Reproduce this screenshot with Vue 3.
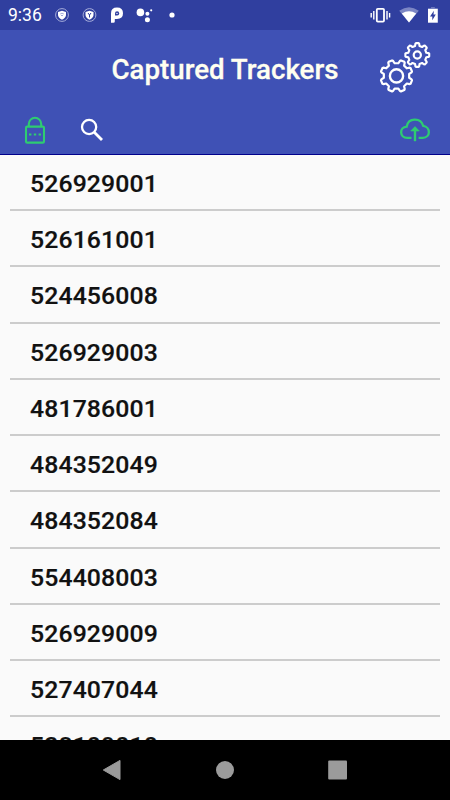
<template>
  <div class="screen">
    <!-- Status bar -->
    <div class="status">
      <span class="time">9:36</span>
      <svg class="status-left" width="136" height="30" viewBox="50 0 136 30">
        <g v-for="x in [62, 89.5]" :key="x">
          <circle :cx="x" cy="15" r="6.4" fill="none" stroke="#a4abd9" stroke-width="1" />
          <path :d="`M${x} 10.7l4 1.4v3q0 2.8-4 4.6q-4-1.8-4-4.6v-3z`" fill="#fff" />
        </g>
        <path d="M60.2 14q1.8-1.6 3.6 0M61 15.5h2" fill="none" stroke="#8c95cf" stroke-width=".8" />
        <path d="M88 13l1.5 2 1.5-2M89.5 15v2.5" fill="none" stroke="#303f9f" stroke-width="1" />
        <path d="M111 22.8V13.4q0-5.8 6-5.8t6 5.7t-6 5.7h-2.2v2.4q0 1.4-1.4 1.4z" fill="#fff" />
        <path d="M115 15.6v-2.2q0-2.1 2.1-2.1t2.1 2.1t-2.1 2.2z" fill="#303f9f" />
        <circle cx="117" cy="13.4" r=".7" fill="#fff" />
        <g fill="#fff">
          <circle cx="140.4" cy="12.4" r="3.8" />
          <circle cx="147.4" cy="13.7" r="2" />
          <circle cx="151.2" cy="10.3" r="1.1" />
          <circle cx="147.4" cy="19.7" r="2.5" />
          <circle cx="172" cy="15" r="2.6" />
        </g>
      </svg>
      <svg class="status-right" width="80" height="30" viewBox="370 0 80 30">
        <rect x="376.8" y="8.8" width="7.2" height="12.8" rx="1" fill="none" stroke="#fff" stroke-width="1.8" />
        <path d="M373.8 11v8.4M371.2 13v4.4M387 11v8.4M389.6 13v4.4" stroke="#fff" stroke-width="1.4" />
        <path d="M399.2 10.8Q409 3.6 418.8 10.8L409 22.5z" fill="#7c86c4" />
        <path d="M401.8 13.6Q409 8.8 416.2 13.6L409 22.5z" fill="#fff" />
        <path d="M428 8.7h9.8v14H428z" fill="#fff" />
        <path d="M431 7.2h3.8v1.5H431z" fill="#7c86c4" />
        <path d="M433.9 10.8l-3.9 5.7h2.3v3.7l3.5-5.7h-2.3z" fill="#303f9f" />
      </svg>
    </div>

    <header class="header">
      <h1>Captured Trackers</h1>
      <svg class="gears" width="60" height="60" viewBox="375 38 60 60">
        <g fill="none" stroke="#fff" stroke-linejoin="round">
          <path :d="gear(396.5, 75.9, 12.8, 16.1, 22.5)" stroke-width="2.2" />
          <circle cx="396.5" cy="75.9" r="6.6" stroke-width="2.4" />
          <path :d="gear(417.3, 55, 9.3, 12, 0)" stroke-width="2.1" />
          <circle cx="417.3" cy="55" r="3.6" stroke-width="2.2" />
        </g>
      </svg>
    </header>

    <div class="toolbar">
      <svg width="22" height="28" viewBox="24 115 22 28">
        <g fill="none" stroke="#2ecc71" stroke-width="2.1">
          <rect x="26" y="125.6" width="18" height="16" rx="1.2" />
          <path d="M28.8 125v-2a6.2 6.2 0 0 1 12.4 0v2" />
        </g>
        <path d="M29 132.5h2.4v2H29zM33.8 132.5h2.4v2h-2.4zM38.6 132.5H41v2h-2.4z" fill="#2ecc71" />
      </svg>
      <svg class="search" width="24" height="24" viewBox="80 117 24 24">
        <circle cx="89.1" cy="126" r="7.1" fill="none" stroke="#fff" stroke-width="2.3" />
        <path d="M94 131l8 8" stroke="#fff" stroke-width="2.9" />
      </svg>
      <svg class="upload" width="32" height="26" viewBox="399 117 32 26">
        <path d="M411.5 137.8h-4.2c-8 0-8.2-10.6-.6-11.2c1.5-9 14-9.2 16.5-.8c7.6 1 7.6 12-.4 12h-4.2" fill="none" stroke="#2ecc71" stroke-width="2.3" />
        <path d="M415 141.2v-12" stroke="#2ecc71" stroke-width="2.4" />
        <path d="M415 126.6l4.3 4.4h-8.6z" fill="#2ecc71" stroke="#2ecc71" stroke-width=".6" />
      </svg>
    </div>

    <ul class="list">
      <li v-for="(t, i) in trackers" :key="i">{{ t }}</li>
    </ul>

    <nav class="nav">
      <svg width="20" height="22" viewBox="0 0 20 22"><path d="M1.3 11L18 1.4v19.2z" fill="#9b9b9b" stroke="#9b9b9b" stroke-linejoin="round" /></svg>
      <svg width="20" height="20" viewBox="0 0 20 20"><circle cx="10" cy="10" r="9" fill="#9b9b9b" /></svg>
      <svg width="20" height="20" viewBox="0 0 20 20"><rect x=".2" y=".4" width="18.8" height="19.2" rx="1" fill="#9b9b9b" /></svg>
    </nav>
  </div>
</template>

<script setup>
const trackers = [
  '526929001',
  '526161001',
  '524456008',
  '526929003',
  '481786001',
  '484352049',
  '484352084',
  '554408003',
  '526929009',
  '527407044',
  '528109010'
]

// outline of an 8-tooth gear, offset in degrees
function gear(cx, cy, inner, outer, offset) {
  const pts = []
  for (let i = 0; i < 8; i++) {
    const mid = offset + i * 45
    for (const [d, r] of [[-14, inner], [-9.5, outer - 0.6], [-6.5, outer], [6.5, outer], [9.5, outer - 0.6], [14, inner]]) {
      const a = ((mid + d - 90) * Math.PI) / 180
      pts.push(`${(cx + r * Math.cos(a)).toFixed(2)} ${(cy + r * Math.sin(a)).toFixed(2)}`)
    }
  }
  return `M${pts.join('L')}z`
}
</script>

<style>
body {
  margin: 0;
}
</style>

<style scoped>
.screen {
  width: 450px;
  height: 800px;
  display: flex;
  flex-direction: column;
  overflow: hidden;
  background: #fafafa;
  font-family: Roboto, "Liberation Sans", sans-serif;
}

svg {
  display: block;
  flex: none;
}

.status {
  height: 30px;
  flex: none;
  display: flex;
  align-items: center;
  background: #303f9f;
  color: #fff;
}

.time {
  width: 42px;
  padding-left: 8px;
  font-size: 17.5px;
  line-height: 32px;
}

.status-right {
  margin-left: auto;
}

.header {
  height: 75px;
  flex: none;
  display: grid;
  grid-template-columns: 75px 1fr 75px;
  background: #3f51b5;
}

h1 {
  grid-column: 2;
  margin: 0;
  text-align: center;
  white-space: nowrap;
  font-size: 27.7px;
  font-weight: 500;
  line-height: 79px;
  color: #fffff0;
  -webkit-text-stroke: 0.3px #fffff0;
}

.gears {
  margin-top: 8px;
}

.toolbar {
  height: 49px;
  flex: none;
  display: flex;
  align-items: center;
  padding: 0 19px 0 24px;
  background: #3f51b5;
  border-bottom: 1px solid #00008b;
}

.search {
  margin-left: 34px;
}

.upload {
  margin-left: auto;
}

.list {
  flex: 1;
  min-height: 0;
  overflow: hidden;
  margin: 0;
  padding: 0 10px;
  list-style: none;
}

.list li {
  box-sizing: border-box;
  height: 56.22px;
  padding-left: 20px;
  border-bottom: 2px solid #ccc;
  font-size: 24.8px;
  font-weight: 500;
  letter-spacing: 0.12px;
  line-height: 58px;
  color: #111;
  -webkit-text-stroke: 0.2px #111;
}

.nav {
  height: 60px;
  flex: none;
  display: flex;
  align-items: center;
  justify-content: center;
  gap: 93px;
  background: #000;
}
</style>
